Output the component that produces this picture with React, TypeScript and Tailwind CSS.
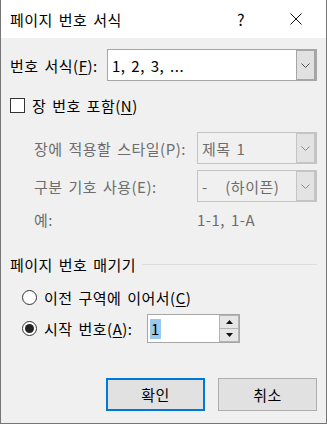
import React from 'react';

const font = { fontFamily: '"Noto Sans CJK KR", "Noto Sans", sans-serif' };

const Chevron = ({ color = '#606060' }: { color?: string }) => (
  <svg width="9" height="5" viewBox="0 0 9 5" fill="none">
    <path d="M0.5 0.5 L4.5 4.5 L8.5 0.5" stroke={color} strokeWidth="1" />
  </svg>
);

const Combo = ({ value, disabled }: { value: string; disabled?: boolean }) => (
  <div
    className={`flex h-full flex-1 border ${
      disabled ? 'border-[#c4c4c4] bg-[#f0f0f0] text-[#6d6d6d]' : 'border-[#a6a6a6] bg-white text-black'
    }`}
  >
    <div className="flex flex-1 items-center whitespace-pre pl-[4px] text-[15px]">{value}</div>
    <div
      className={`flex w-[20px] items-center justify-center border-l border-r-2 border-y ${
        disabled ? 'border-[#c4c4c4] bg-[#e3e3e3]' : 'border-[#a6a6a6] bg-[#e1e1e1]'
      }`}
    >
      <Chevron color={disabled ? '#8a8a8a' : '#505050'} />
    </div>
  </div>
);

const U = ({ children }: { children: React.ReactNode }) => <span className="underline underline-offset-2">{children}</span>;

export default function App() {
  return (
    <div
      className="flex h-[424px] w-[327px] flex-col border-x border-b border-[#767676] bg-[#f0f0f0] leading-none tracking-[0.5px] [word-spacing:2px]"
      style={font}
    >
      {/* Title bar */}
      <div className="flex h-[38px] items-center bg-white pl-[9px] text-[15px] text-black">
        <span>페이지 번호 서식</span>
        <span className="ml-auto mr-[45px] text-[16px]">?</span>
        <svg width="12" height="12" viewBox="0 0 12 12" className="mr-[24px]">
          <path d="M0.5 0.5 L11.5 11.5 M11.5 0.5 L0.5 11.5" stroke="#111" strokeWidth="1" />
        </svg>
      </div>

      <div className="flex flex-col pl-[9px] pr-[9px] text-[15px]">
        {/* 번호 서식 */}
        <div className="mt-[11px] flex h-[32px] items-center">
          <span className="w-[97px]">
            번호 서식(<U>F</U>):
          </span>
          <Combo value="1, 2, 3, ..." />
        </div>

        {/* 장 번호 포함 */}
        <div className="mt-[15px] flex h-[18px] items-center">
          <div className="h-[15px] w-[15px] border border-[#333] bg-white" />
          <span className="ml-[7px]">
            장 번호 포함(<U>N</U>)
          </span>
        </div>

        <div className="mt-[18px] flex h-[32px] items-center text-[#6d6d6d]">
          <span className="w-[187px] pl-[24px]">장에 적용할 스타일(P):</span>
          <Combo value="제목 1" disabled />
        </div>
        <div className="mt-[6px] flex h-[32px] items-center text-[#6d6d6d]">
          <span className="w-[187px] pl-[24px]">구분 기호 사용(E):</span>
          <Combo value="-   (하이픈)" disabled />
        </div>
        <div className="mt-[8px] flex h-[18px] items-center text-[#6d6d6d]">
          <span className="w-[187px] pl-[24px]">예:</span>
          <span>1-1, 1-A</span>
        </div>

        {/* 페이지 번호 매기기 */}
        <div className="mt-[27px] flex h-[18px] items-center">
          <span>페이지 번호 매기기</span>
          <div className="ml-[6px] h-px flex-1 bg-[#dcdcdc]" />
        </div>

        <div className="mt-[15px] flex h-[18px] items-center pl-[12px]">
          <div className="h-[15px] w-[15px] rounded-full border border-[#333] bg-white" />
          <span className="ml-[7px]">
            이전 구역에 이어서(<U>C</U>)
          </span>
        </div>

        <div className="mt-[8px] flex h-[29px] items-center pl-[12px]">
          <div className="flex h-[15px] w-[15px] items-center justify-center rounded-full border border-[#333] bg-white">
            <div className="h-[9px] w-[9px] rounded-full bg-[#222]" />
          </div>
          <span className="ml-[7px] w-[103px]">
            시작 번호(<U>A</U>):
          </span>
          <div className="flex h-full w-[93px] border border-[#a6a6a6] bg-white">
            <div className="flex flex-1 items-center pl-[2px]">
              <span className="bg-[#99c9ef] px-px leading-[20px] text-black">1</span>
            </div>
            <div className="flex w-[20px] flex-col">
              <div className="flex flex-1 items-center justify-center border border-[#b4b4b4] bg-[#e6e6e6]">
                <svg width="7" height="4" viewBox="0 0 7 4">
                  <path d="M0 4 L3.5 0 L7 4 Z" fill="#111" />
                </svg>
              </div>
              <div className="flex flex-1 items-center justify-center border-x border-b border-[#b4b4b4] bg-[#e6e6e6]">
                <svg width="7" height="4" viewBox="0 0 7 4">
                  <path d="M0 0 L3.5 4 L7 0 Z" fill="#111" />
                </svg>
              </div>
            </div>
          </div>
        </div>

        {/* Buttons */}
        <div className="mt-[35px] flex h-[33px] justify-end gap-[13px]">
          <button className="w-[99px] border-2 border-[#0078d7] bg-[#e1e1e1] text-[15px] text-black">확인</button>
          <button className="w-[99px] border border-[#adadad] bg-[#e1e1e1] text-[15px] text-black">취소</button>
        </div>
      </div>
    </div>
  );
}
